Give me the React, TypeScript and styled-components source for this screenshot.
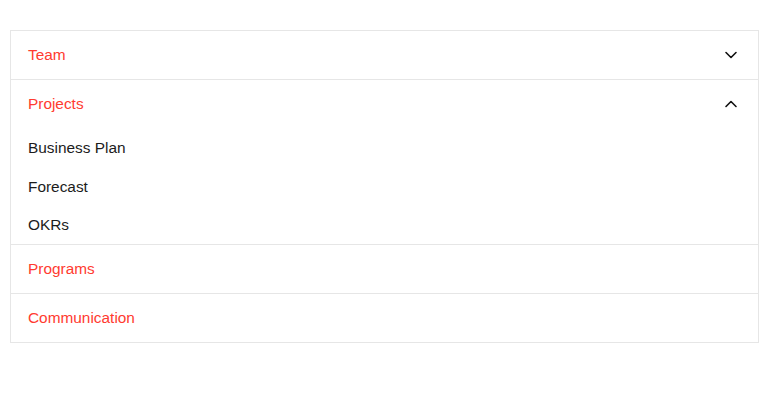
import * as React from 'react';
import { useState } from 'react';
import styled, { createGlobalStyle } from 'styled-components';

const GlobalStyle = createGlobalStyle`
  body {
    margin: 0;
    background: #ffffff;
    font-family: "Liberation Sans", Arial, sans-serif;
  }
`;

const Page = styled.div`
  padding: 30px 11px 0 10px;
`;

const Accordion = styled.div`
  border: 1px solid #e6e6e6;
  background: #fff;
`;

const Section = styled.div`
  & + & {
    border-top: 1px solid #e6e6e6;
  }
`;

const Header = styled.button`
  display: flex;
  align-items: center;
  justify-content: space-between;
  width: 100%;
  height: 48px;
  padding: 0 20px 0 17px;
  border: none;
  background: none;
  cursor: pointer;
  font-family: inherit;
  font-size: 15.4px;
  color: #ff3b30;
  text-align: left;
`;

const Panel = styled.ul`
  list-style: none;
  margin: 0;
  padding: 0 0 0 17px;
`;

const Item = styled.li`
  height: 39px;
  display: flex;
  align-items: center;
  font-size: 15.4px;
  color: #1c1c1c;

  &:last-child {
    height: 38px;
  }
`;

const Chevron = ({ up }: { up: boolean }) => (
  <svg width="14" height="14" viewBox="0 0 14 14" fill="none">
    <path
      d={up ? 'M2 9.5 7 4.5 12 9.5' : 'M2 4.5 7 9.5 12 4.5'}
      stroke="#111"
      strokeWidth="1.6"
      strokeLinecap="round"
      strokeLinejoin="round"
    />
  </svg>
);

interface Group {
  title: string
  items?: string[]
}

const GROUPS: Group[] = [
  { title: 'Team', items: ['Members', 'Roles'] },
  { title: 'Projects', items: ['Business Plan', 'Forecast', 'OKRs'] },
  { title: 'Programs' },
  { title: 'Communication' },
];

export default function App() {
  const [open, setOpen] = useState('Projects');

  return (
    <>
      <GlobalStyle />
      <Page>
        <Accordion>
          {GROUPS.map(group => {
            const isOpen = open === group.title;
            return (
              <Section key={group.title}>
                <Header onClick={() => setOpen(isOpen ? '' : group.title)}>
                  <span>{group.title}</span>
                  {group.items && <Chevron up={isOpen} />}
                </Header>
                {isOpen && group.items && (
                  <Panel>
                    {group.items.map(item => <Item key={item}>{item}</Item>)}
                  </Panel>
                )}
              </Section>
            );
          })}
        </Accordion>
      </Page>
    </>
  );
}
